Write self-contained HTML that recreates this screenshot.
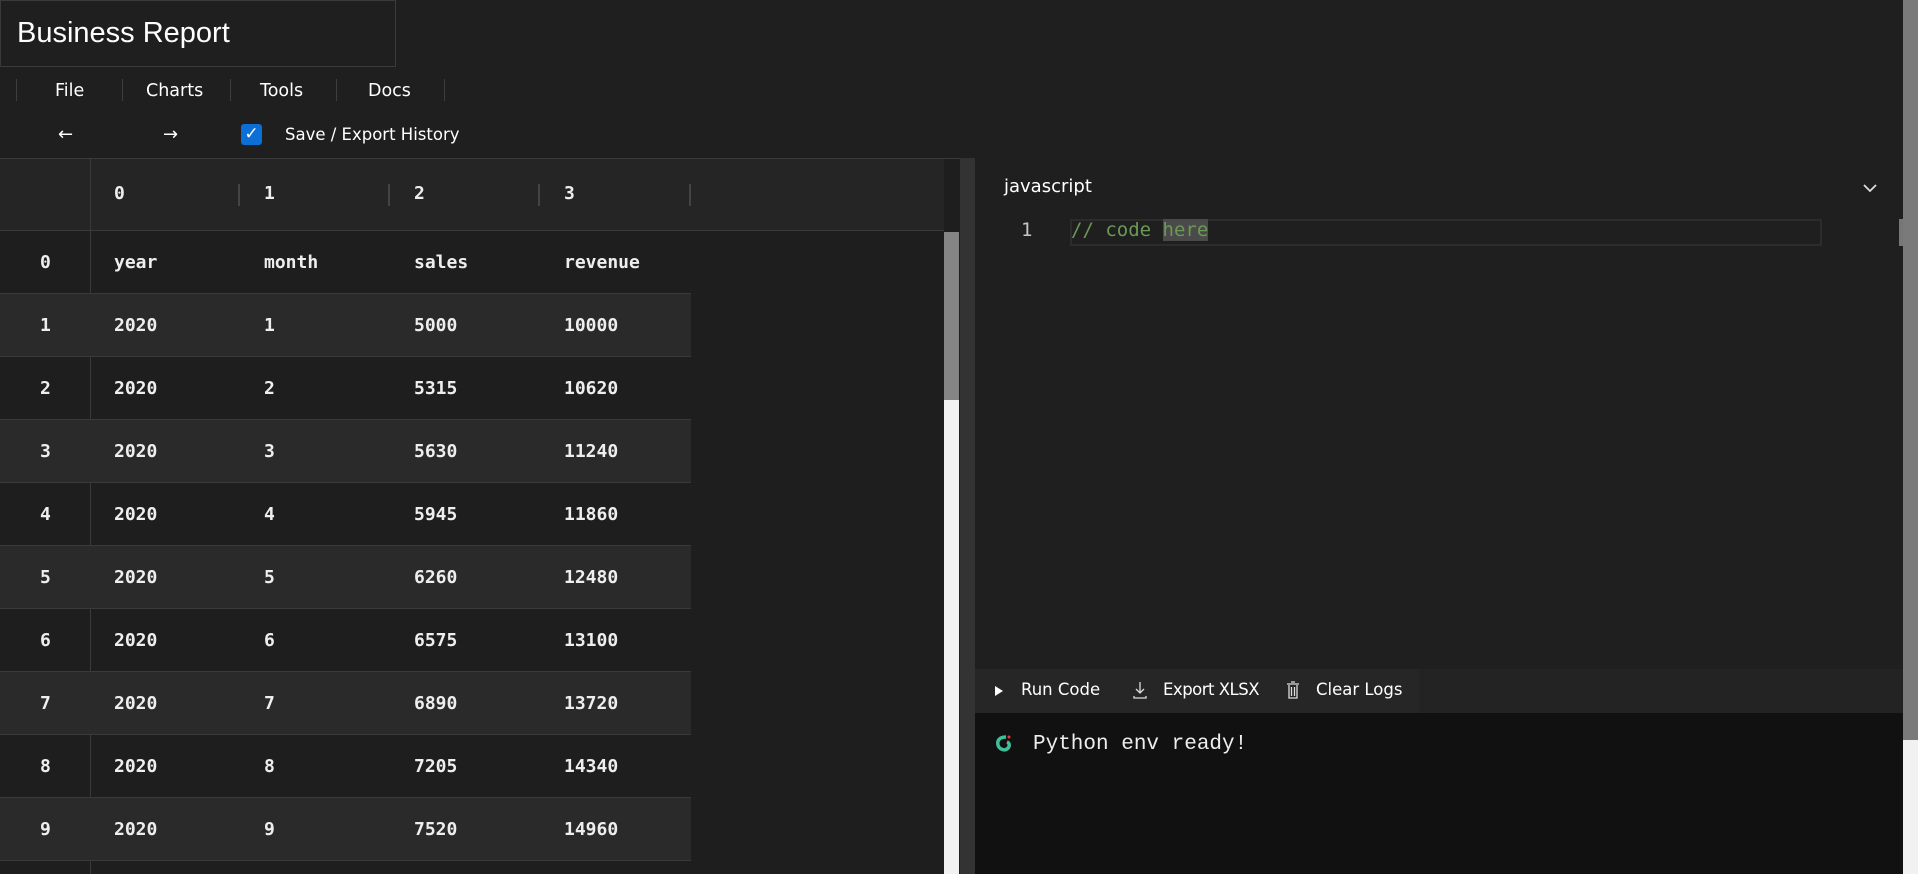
<!DOCTYPE html>
<html><head><meta charset="utf-8"><style>
*{margin:0;padding:0;box-sizing:border-box}
body{width:1918px;height:874px;overflow:hidden;background:#1f1f1f;position:relative;font-family:"DejaVu Sans","Liberation Sans",sans-serif;color:#fff}
.a{position:absolute}
.title{left:0;top:0;width:396px;height:67px;border:1px solid #3a3a3a;font-family:"Liberation Sans",sans-serif;font-size:29px;padding:16px 0 0 16px}
.sep{top:79px;width:1px;height:22px;background:#3e3e3e}
.menu{top:80px;font-size:17.5px;line-height:22px}
.tb{font-family:"DejaVu Sans Mono",monospace;font-weight:bold;font-size:18px;color:#eee}
.row{left:0;width:691px;height:63px;border-bottom:1px solid #3a3a3a}
.cell{line-height:63px}
</style></head><body>
<div class="a title">Business Report</div>
<div class="a sep" style="left:16px"></div><div class="a sep" style="left:122px"></div><div class="a sep" style="left:230px"></div><div class="a sep" style="left:336px"></div><div class="a sep" style="left:444px"></div>
<div class="a menu" style="left:55px">File</div>
<div class="a menu" style="left:146px">Charts</div>
<div class="a menu" style="left:260px">Tools</div>
<div class="a menu" style="left:368px">Docs</div>
<div class="a" style="left:58px;top:124px;font-size:18px">←</div>
<div class="a" style="left:163px;top:124px;font-size:18px">→</div>
<div class="a" style="left:241px;top:124px;width:21px;height:21px;background:#0b6fd6;border-radius:3px;text-align:center;font-size:17px;line-height:21px;font-weight:bold">✓</div>
<div class="a" style="left:285px;top:125px;font-size:16.5px">Save / Export History</div>

<div class="a" style="left:0;top:158px;width:960px;height:716px;background:#1e1e1e;border-top:1px solid #3a3a3a"></div>
<div class="a" style="left:0;top:158px;width:944px;height:73px;background:#252525;border-top:1px solid #3a3a3a;border-bottom:1px solid #3a3a3a"></div>
<div class="a" style="left:90px;top:158px;width:1px;height:716px;background:#3a3a3a"></div>
<div class="a sep" style="left:238px;top:184px;width:2px;background:#444"></div>
<div class="a sep" style="left:388px;top:184px;width:2px;background:#444"></div>
<div class="a sep" style="left:538px;top:184px;width:2px;background:#444"></div>
<div class="a sep" style="left:689px;top:184px;width:2px;background:#444"></div>
<div class="a tb" style="left:114px;top:183px">0</div>
<div class="a tb" style="left:264px;top:183px">1</div>
<div class="a tb" style="left:414px;top:183px">2</div>
<div class="a tb" style="left:564px;top:183px">3</div>
<div id="rows"></div>
<div class="a" style="left:944px;top:232px;width:15px;height:642px;background:#f1f1f1"></div>
<div class="a" style="left:944px;top:232px;width:15px;height:168px;background:#858585"></div>
<div class="a" style="left:960px;top:158px;width:15px;height:716px;background:#333"></div>

<div class="a" style="left:975px;top:158px;width:928px;height:511px;background:#1f1f1f"></div>
<div class="a" style="left:1004px;top:176px;font-size:18px">javascript</div>
<svg class="a" style="left:1862px;top:180px" width="16" height="16" viewBox="0 0 16 16"><path d="M2 5l6 6 6-6" stroke="#ddd" stroke-width="1.8" fill="none"/></svg>
<div class="a" style="left:1070px;top:219px;width:752px;height:27px;border:2px solid #2c2c2c"></div>
<div class="a" style="left:1021px;top:219px;font-family:'DejaVu Sans Mono',monospace;font-size:19px;color:#c6c6c6">1</div>
<div class="a" style="left:1071px;top:219px;font-family:'DejaVu Sans Mono',monospace;font-size:19px;color:#6a9955;white-space:pre">// code <span style="background:#4a4a4a">here</span></div>
<div class="a" style="left:1899px;top:219px;width:6px;height:27px;background:#777"></div>
<div class="a" style="left:1903px;top:0;width:15px;height:740px;background:#7a7a7a"></div>
<div class="a" style="left:1903px;top:740px;width:15px;height:134px;background:#f1f1f1"></div>

<div class="a" style="left:975px;top:669px;width:928px;height:44px;background:#232323"></div>
<div class="a" style="left:975px;top:669px;width:444px;height:44px;background:#262626"></div>
<svg class="a" style="left:993px;top:684px" width="12" height="14"><path d="M2 2l8 5-8 5z" fill="#fff"/></svg>
<div class="a" style="left:1021px;top:680px;font-size:16.5px">Run Code</div>
<svg class="a" style="left:1132px;top:680px" width="16" height="20" viewBox="0 0 16 20"><path d="M8 2v11M4 9l4 4 4-4M2 16v2h12v-2" stroke="#ddd" stroke-width="1.3" fill="none"/></svg>
<div class="a" style="left:1163px;top:680px;font-size:16.5px;letter-spacing:-0.5px">Export XLSX</div>
<svg class="a" style="left:1286px;top:680px" width="14" height="20" viewBox="0 0 14 20"><path d="M1 4h12M5 2h4M3 5v13h8V5M5.5 7v9M8.5 7v9" stroke="#ddd" stroke-width="1.3" fill="none"/></svg>
<div class="a" style="left:1316px;top:680px;font-size:16.5px">Clear Logs</div>

<div class="a" style="left:975px;top:713px;width:928px;height:161px;background:#111"></div>
<svg class="a" style="left:994px;top:734px" width="20" height="22" viewBox="0 0 20 22"><path d="M12 3C5 3 3 7 4 11s6 6 9 4 3-6 0-7" stroke="#3fbf96" stroke-width="3.5" fill="none"/><circle cx="15" cy="3" r="1.5" fill="#e33"/></svg>
<div class="a" style="left:1033px;top:733px;font-family:'Liberation Mono',monospace;font-size:21px;color:#eee">Python env ready!</div>

<script>
var d=[["0","year","month","sales","revenue"]];
for(var i=1;i<=9;i++)d.push([i,"2020",i,5000+315*(i-1),10000+620*(i-1)]);
var h="";
for(var i=0;i<d.length;i++){var t=231+i*63.05;
h+='<div class="a row" style="top:'+t+'px;'+(i%2?'background:#2a2a2a':'')+'"></div>';
h+='<div class="a tb cell" style="left:40px;top:'+t+'px">'+d[i][0]+'</div>';
var xs=[114,264,414,564];for(var j=0;j<4;j++)h+='<div class="a tb cell" style="left:'+xs[j]+'px;top:'+t+'px">'+d[i][j+1]+'</div>';}
document.getElementById('rows').innerHTML=h;
</script>
</body></html>
